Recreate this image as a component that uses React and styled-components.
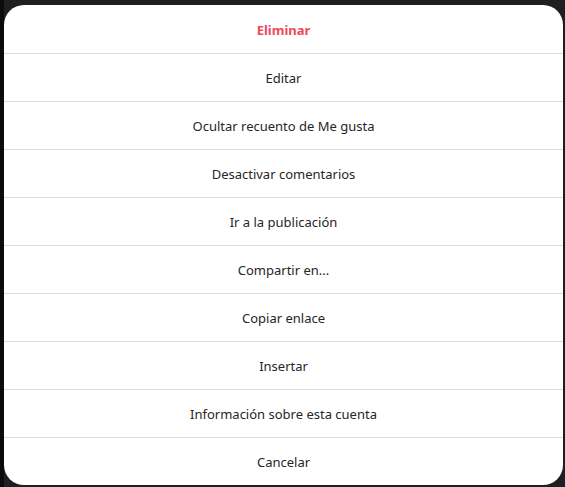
import React from 'react';
import styled, {createGlobalStyle} from 'styled-components';

const GlobalStyle = createGlobalStyle`
	html, body {
		margin: 0;
		padding: 0;
		background: #18191b;
		height: 100%;
		overflow: hidden;
	}
	#root {
		height: 100%;
	}
`

const Backdrop = styled.div`
	height: 100%;
	padding: 5px 0 0 4px;
	box-sizing: border-box;
	background: linear-gradient(to right, #0b0b0c 0, #0b0b0c 4px, #1e1f21 4px);
`

const Sheet = styled.div`
	width: 559px;
	background: #ffffff;
	border-radius: 20px;
	overflow: hidden;
	display: flex;
	flex-direction: column;
`

const Option = styled.button`
	height: 48px;
	border: none;
	border-top: ${props => props.first ? 'none' : '1px solid #dbdbdb'};
	background: transparent;
	display: flex;
	align-items: center;
	justify-content: center;
	padding: 1px 8px 0;
	box-sizing: border-box;
	font: ${props => props.danger ? 700 : 400} 13px "Noto Sans", "Open Sans", sans-serif;
	color: ${props => props.danger ? '#ed4956' : '#262626'};
	cursor: pointer;
`

const options = [
    'Editar',
    'Ocultar recuento de Me gusta',
    'Desactivar comentarios',
    'Ir a la publicación',
    'Compartir en...',
    'Copiar enlace',
    'Insertar',
    'Información sobre esta cuenta',
    'Cancelar',
];

export default function App() {
    return (
        <>
            <GlobalStyle/>
            <Backdrop>
                <Sheet>
                    <Option first danger>Eliminar</Option>
                    {options.map(label => (
                        <Option key={label}>{label}</Option>
                    ))}
                </Sheet>
            </Backdrop>
        </>
    );
}
